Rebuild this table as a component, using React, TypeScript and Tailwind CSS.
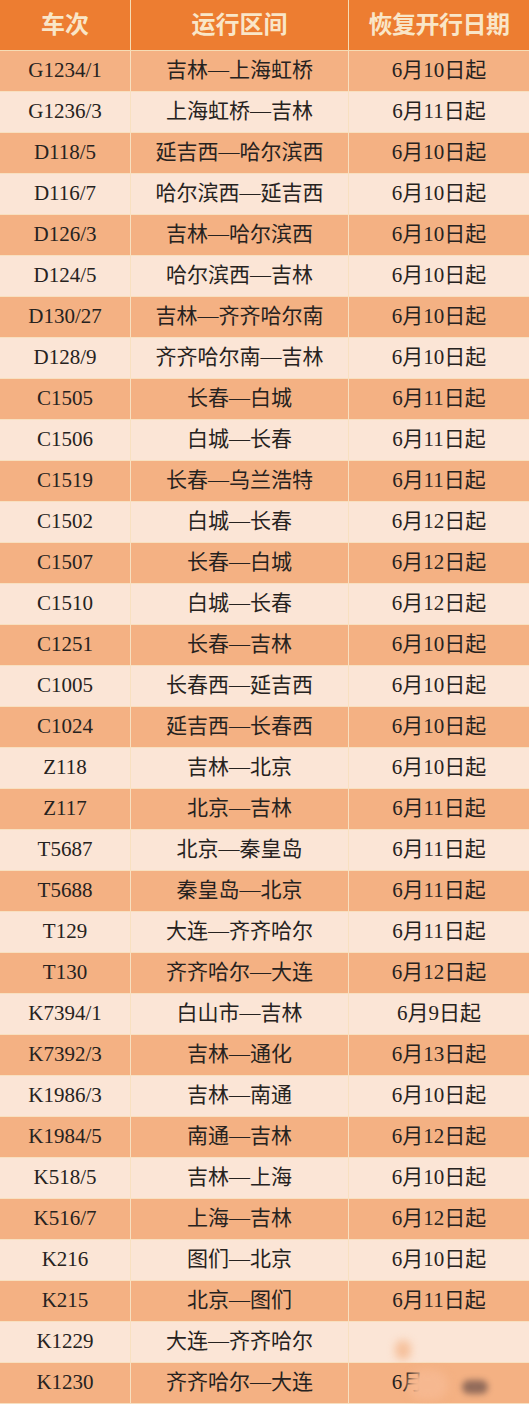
import React from "react";

const rows: [string, string, string][] = [
  ["G1234/1", "吉林—上海虹桥", "6月10日起"],
  ["G1236/3", "上海虹桥—吉林", "6月11日起"],
  ["D118/5", "延吉西—哈尔滨西", "6月10日起"],
  ["D116/7", "哈尔滨西—延吉西", "6月10日起"],
  ["D126/3", "吉林—哈尔滨西", "6月10日起"],
  ["D124/5", "哈尔滨西—吉林", "6月10日起"],
  ["D130/27", "吉林—齐齐哈尔南", "6月10日起"],
  ["D128/9", "齐齐哈尔南—吉林", "6月10日起"],
  ["C1505", "长春—白城", "6月11日起"],
  ["C1506", "白城—长春", "6月11日起"],
  ["C1519", "长春—乌兰浩特", "6月11日起"],
  ["C1502", "白城—长春", "6月12日起"],
  ["C1507", "长春—白城", "6月12日起"],
  ["C1510", "白城—长春", "6月12日起"],
  ["C1251", "长春—吉林", "6月10日起"],
  ["C1005", "长春西—延吉西", "6月10日起"],
  ["C1024", "延吉西—长春西", "6月10日起"],
  ["Z118", "吉林—北京", "6月10日起"],
  ["Z117", "北京—吉林", "6月11日起"],
  ["T5687", "北京—秦皇岛", "6月11日起"],
  ["T5688", "秦皇岛—北京", "6月11日起"],
  ["T129", "大连—齐齐哈尔", "6月11日起"],
  ["T130", "齐齐哈尔—大连", "6月12日起"],
  ["K7394/1", "白山市—吉林", "6月9日起"],
  ["K7392/3", "吉林—通化", "6月13日起"],
  ["K1986/3", "吉林—南通", "6月10日起"],
  ["K1984/5", "南通—吉林", "6月12日起"],
  ["K518/5", "吉林—上海", "6月10日起"],
  ["K516/7", "上海—吉林", "6月12日起"],
  ["K216", "图们—北京", "6月10日起"],
  ["K215", "北京—图们", "6月11日起"],
  ["K1229", "大连—齐齐哈尔", ""],
  ["K1230", "齐齐哈尔—大连", "LAST"],
];

export default function App() {
  return (
    <div
      className="relative w-[529px] h-[1404px] overflow-hidden bg-[#fbe5d6] text-[#262220]"
      style={{ fontFamily: '"Liberation Serif", "Noto Sans CJK SC", serif' }}
    >
      <div className="grid grid-cols-[131px_218px_180px] h-[51px] bg-[#ed7d31] border-b border-[#f6dcb4] text-[24px] font-semibold text-[#f9e6c8]">
        <div className="flex items-center justify-center border-r border-[#f6dcb4]">车次</div>
        <div className="flex items-center justify-center border-r border-[#f6dcb4]">运行区间</div>
        <div className="flex items-center justify-center tracking-[-0.5px]">恢复开行日期</div>
      </div>
      {rows.map((r, i) => (
        <div
          key={i}
          className={
            "grid grid-cols-[131px_218px_180px] h-[41px] border-b border-[#f8e0c0] text-[21px] " +
            (i % 2 === 0 ? "bg-[#f4b183]" : "bg-[#fbe5d6]")
          }
        >
          <div className="flex items-center justify-center border-r border-[#f8e0c0]">{r[0]}</div>
          <div className="flex items-center justify-center border-r border-[#f8e0c0]">{r[1]}</div>
          <div className="flex items-center justify-center">
            {r[2] === "LAST" ? (
              <span>
                6月<span className="invisible">10日起</span>
              </span>
            ) : (
              r[2]
            )}
          </div>
        </div>
      ))}
      <div className="absolute left-[408px] top-[1370px] w-[40px] h-[30px] rounded-full bg-[#f6b890] blur-[4px]" />
      <div className="absolute left-[462px] top-[1380px] w-[26px] h-[14px] rounded-full bg-[#7a5a50] blur-[3px] opacity-80" />
      <div className="absolute left-[395px] top-[1340px] w-[16px] h-[20px] rounded-full bg-[#f4b183] blur-[4px] opacity-70" />
    </div>
  );
}
